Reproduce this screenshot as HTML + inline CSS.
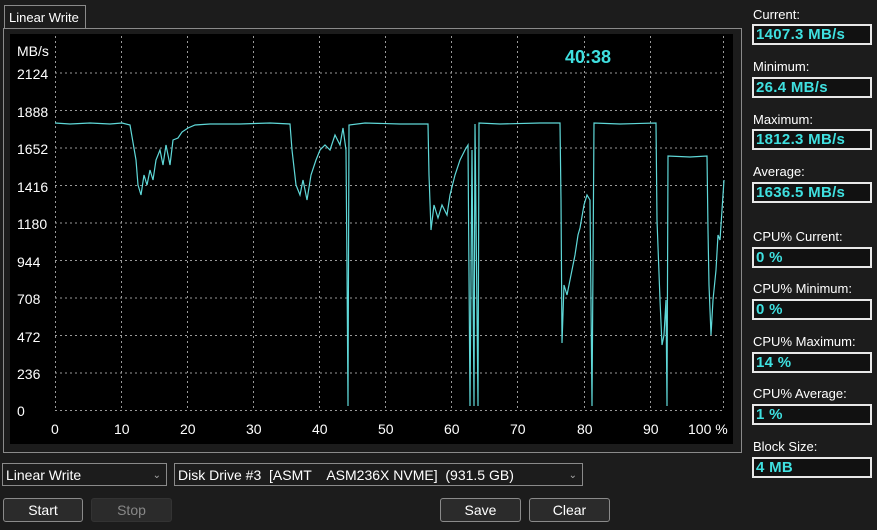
<!DOCTYPE html>
<html><head><meta charset="utf-8"><style>
body{margin:0;width:877px;height:530px;background:#1c1c1c;font-family:"Liberation Sans",sans-serif;color:#fff;position:relative;overflow:hidden}
.a{position:absolute}
.lbl{font-size:13px;color:#fff}
.val{position:absolute;left:752px;width:114px;height:17px;border:2px solid #e8e8e8;background:#111;color:#3fe0e0;font-weight:bold;font-size:15px;line-height:17px;padding-left:2px;letter-spacing:0.3px}
.sel{position:absolute;top:463px;height:23px;border:1px solid #8a8a8a;background:#1c1c1c;font-size:14px;line-height:23px;padding-left:3px;box-sizing:border-box;white-space:nowrap}
.btn{position:absolute;top:498px;height:24px;border:1px solid #8a8a8a;border-radius:3px;background:#2b2b2b;font-size:14px;line-height:23px;text-align:center;box-sizing:border-box}
</style></head><body>
<div class="a" style="left:4px;top:5px;width:82px;height:23px;border:1px solid #8a8a8a;border-bottom:none;background:#1c1c1c;font-size:13px;line-height:23px;padding-left:4px;box-sizing:border-box;z-index:2;white-space:nowrap">Linear Write</div>
<div class="a" style="left:3px;top:28px;width:739px;height:425px;border:1px solid #8a8a8a;box-sizing:border-box"></div>
<svg class="a" style="left:0;top:0" width="745" height="455">
<rect x="10" y="34" width="723" height="410" fill="#000"/>
<g stroke="#999" stroke-width="1" stroke-dasharray="2,3" fill="none">
<path d="M55 73H724M55 110.5H724M55 148H724M55 185.5H724M55 223H724M55 260.5H724M55 298H724M55 335.5H724M55 373H724M55 410.5H724"/>
<path d="M55.5 36V410M121.5 36V410M187.5 36V410M253.5 36V410M319.5 36V410M385.5 36V410M451.5 36V410M517.5 36V410M584.5 36V410M650.5 36V410M723.5 36V410"/>
</g>
<g fill="#fff" font-size="14" font-family="Liberation Sans">
<text x="17" y="56">MB/s</text>
<text x="17" y="79">2124</text><text x="17" y="117">1888</text><text x="17" y="154">1652</text><text x="17" y="192">1416</text><text x="17" y="229">1180</text><text x="17" y="267">944</text><text x="17" y="304">708</text><text x="17" y="342">472</text><text x="17" y="379">236</text><text x="17" y="416">0</text>
<text x="51" y="434">0</text><text x="114" y="434">10</text><text x="180" y="434">20</text><text x="246" y="434">30</text><text x="312" y="434">40</text><text x="378" y="434">50</text><text x="444" y="434">60</text><text x="510" y="434">70</text><text x="577" y="434">80</text><text x="643" y="434">90</text><text x="688" y="434">100 %</text>
</g>
<text x="565" y="63" fill="#3fe0e0" font-size="18" font-weight="bold" font-family="Liberation Sans">40:38</text>
<path fill="none" stroke="#5fd8d8" stroke-width="1.2" d="M55 123L70 124L90 123L110 124L122 123L130 125L136 160L138 185L141 195L144 175L147 185L150 170L153 180L156 160L160 150L163 165L166 145L170 165L173 140L178 138L182 132L188 128L195 125L210 124L240 124L270 123L290 124L292 150L296 185L300 195L303 180L307 200L311 175L316 160L320 150L325 145L330 150L335 135L340 145L343 128L346 150L347 268L348 406L349 125L365 123L400 124L428 124L429 175L431 230L434 205L438 218L442 205L447 215L450 195L455 175L460 160L465 150L468 145L470 406L472 150L474 406L475 124L478 406L479 123L500 124L540 123L560 123L561 200L562 343L564 285L567 295L570 280L575 255L578 235L580 228L584 205L587 195L590 200L592 406L594 123L620 124L656 123L657 220L660 300L662 345L664 335L666 300L667 406L668 156L690 157L707 156L708 230L709 285L711 335L713 300L716 270L718 235L720 240L722 210L724 180"/>
</svg>
<div class="a lbl" style="left:753px;top:7px">Current:</div><div class="val" style="top:24px">1407.3 MB/s</div>
<div class="a lbl" style="left:753px;top:59px">Minimum:</div><div class="val" style="top:77px">26.4 MB/s</div>
<div class="a lbl" style="left:753px;top:112px">Maximum:</div><div class="val" style="top:129px">1812.3 MB/s</div>
<div class="a lbl" style="left:753px;top:164px">Average:</div><div class="val" style="top:182px">1636.5 MB/s</div>
<div class="a lbl" style="left:753px;top:229px">CPU% Current:</div><div class="val" style="top:247px">0 %</div>
<div class="a lbl" style="left:753px;top:281px">CPU% Minimum:</div><div class="val" style="top:299px">0 %</div>
<div class="a lbl" style="left:753px;top:334px">CPU% Maximum:</div><div class="val" style="top:352px">14 %</div>
<div class="a lbl" style="left:753px;top:386px">CPU% Average:</div><div class="val" style="top:404px">1 %</div>
<div class="a lbl" style="left:753px;top:439px">Block Size:</div><div class="val" style="top:457px">4 MB</div>
<div class="sel" style="left:2px;width:165px">Linear Write<span style="position:absolute;right:5px;font-size:10px;color:#aaa">&#8964;</span></div>
<div class="sel" style="left:174px;width:409px">Disk Drive #3 &nbsp;[ASMT &nbsp;&nbsp; ASM236X NVME] &nbsp;(931.5 GB)<span style="position:absolute;right:5px;font-size:10px;color:#aaa">&#8964;</span></div>
<div class="btn" style="left:3px;width:80px">Start</div>
<div class="btn" style="left:91px;width:81px;color:#888;border-color:#333">Stop</div>
<div class="btn" style="left:440px;width:81px">Save</div>
<div class="btn" style="left:529px;width:81px">Clear</div>
</body></html>
